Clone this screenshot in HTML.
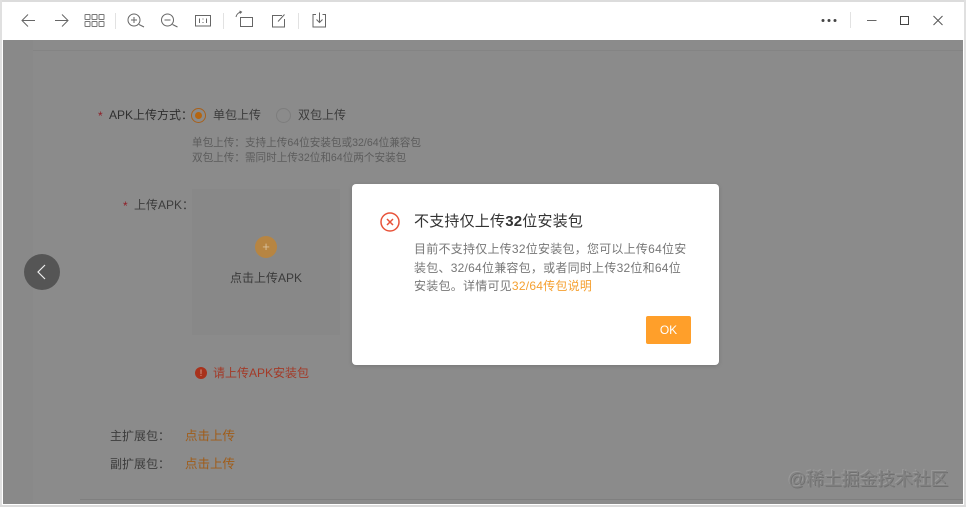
<!DOCTYPE html>
<html><head><meta charset="utf-8">
<style>
html,body{margin:0;padding:0;width:966px;height:507px;overflow:hidden;background:#fff}
body{position:relative;font-family:"Liberation Sans","Noto Sans CJK SC",sans-serif}
.a{position:absolute;white-space:nowrap}
#w{position:absolute;left:0;top:0;width:966px;height:507px;filter:blur(.3px)}
</style></head><body><div id="w">
<div class="a" style="left:0;top:0;width:966px;height:2px;background:#dcdcdc"></div>
<div class="a" style="left:0;top:0;width:2px;height:507px;background:#e0e0e0"></div>
<div class="a" style="left:964px;top:0;width:2px;height:507px;background:#e0e0e0"></div>
<div class="a" style="left:0;top:505px;width:966px;height:2px;background:#dcdcdc"></div>

<svg class="a" style="left:0;top:0" width="966" height="40" fill="none" stroke="#666" stroke-width="1">
<path d="M22 20.500H35M28 14.500l-6 6 6 6"/>
<path d="M55 20.500H68M62 14.500l6 6-6 6"/>
<g stroke="#777"><rect x="85" y="14.500" width="5" height="5" rx=".5"/><rect x="92" y="14.500" width="5" height="5" rx=".5"/><rect x="99" y="14.500" width="5" height="5" rx=".5"/><rect x="85" y="21.500" width="5" height="5" rx=".5"/><rect x="92" y="21.500" width="5" height="5" rx=".5"/><rect x="99" y="21.500" width="5" height="5" rx=".5"/></g>
<path d="M115.500 13V29M223.500 13V29M298.500 13V29M850.500 12V28" stroke="#e2e2e2"/>
<circle cx="134" cy="20" r="6"/><path d="M139 24.500l5 2.500M131 20h6M134 17v6"/>
<circle cx="167.500" cy="20" r="6"/><path d="M172.500 24.500l5 2.500M164.500 20h6"/>
<rect x="195.500" y="15.500" width="15" height="10.500"/><path d="M199.500 18.500v4.500M206.500 18.500v4.500"/><path d="M203 18.500v1M203 22v1"/>
<rect x="240.500" y="17.500" width="12" height="9"/><path d="M236 17c.5-2.500 2.500-4.500 5-5M239.500 11l2 1-1.500 1.500"/>
<path d="M282 15.500h-9.500v11.500h12v-8M278 21.500l6.500-7"/>
<path d="M316 14.500h-3v12.500h12.500v-12.500h-3M319.500 12.500v10M316.500 19.500l3 3 3-3"/>
<circle cx="823" cy="20.500" r="1.500" fill="#444" stroke="none"/><circle cx="829" cy="20.500" r="1.500" fill="#444" stroke="none"/><circle cx="835" cy="20.500" r="1.500" fill="#444" stroke="none"/>
<path d="M867 20.500h9.500"/>
<rect x="900.500" y="16.500" width="8" height="8" stroke="#444"/>
<path d="M933.500 16l9 9M942.500 16l-9 9" stroke="#555"/>
</svg>

<div class="a" style="left:3px;top:40px;width:960px;height:464px;background:#8b8b8b"></div>
<div class="a" style="left:3px;top:40px;width:30px;height:464px;background:#898989"></div>
<div class="a" style="left:33px;top:50px;width:930px;height:1px;background:#848484"></div>
<div class="a" style="left:80px;top:499px;width:883px;height:1px;background:#7f7f7f"></div>

<div class="a" style="left:98px;top:108px;font-size:12px;line-height:17px;color:#8f1f28">*</div>
<div class="a" style="left:109px;top:107px;font-size:12px;line-height:17px;color:#2f2f2f">APK上传方式：</div>
<div class="a" style="left:191px;top:108px;width:13px;height:13px;border:1px solid #a8601a;border-radius:50%"></div>
<div class="a" style="left:195px;top:112px;width:7px;height:7px;background:#b56510;border-radius:50%"></div>
<div class="a" style="left:213px;top:107px;font-size:12px;line-height:17px;color:#3c3c3c">单包上传</div>
<div class="a" style="left:276px;top:108px;width:13px;height:13px;border:1px solid #7d7d7d;border-radius:50%"></div>
<div class="a" style="left:298px;top:107px;font-size:12px;line-height:17px;color:#3c3c3c">双包上传</div>
<div class="a" style="left:192px;top:136px;font-size:10.600px;line-height:15px;color:#5c5c5c">单包上传：支持上传64位安装包或32/64位兼容包</div>
<div class="a" style="left:192px;top:151px;font-size:10.600px;line-height:15px;color:#5c5c5c">双包上传：需同时上传32位和64位两个安装包</div>

<div class="a" style="left:123px;top:198px;font-size:12px;line-height:17px;color:#8f1f28">*</div>
<div class="a" style="left:134px;top:197px;font-size:12px;line-height:17px;color:#3c3c3c">上传APK：</div>
<div class="a" style="left:192px;top:189px;width:148px;height:146px;background:#888"></div>
<div class="a" style="left:255px;top:236px;width:22px;height:22px;background:#b78542;border-radius:50%"></div>
<div class="a" style="left:255px;top:236px;width:22px;height:22px;line-height:22px;text-align:center;font-size:13px;color:#d8c09c">+</div>
<div class="a" style="left:230px;top:270px;font-size:12px;line-height:17px;color:#3a3a3a">点击上传APK</div>

<div class="a" style="left:24px;top:254px;width:36px;height:36px;background:#555;border-radius:50%"></div>
<svg class="a" style="left:24px;top:254px" width="36" height="36" fill="none" stroke="#eee" stroke-width="1.200"><path d="M21 11l-7 7 7 7"/></svg>

<div class="a" style="left:195px;top:367px;width:12px;height:12px;background:#a8321c;border-radius:50%;color:#e0b0a0;font-size:9px;line-height:12px;text-align:center">!</div>
<div class="a" style="left:213px;top:365px;font-size:12px;line-height:17px;color:#a33a28">请上传APK安装包</div>

<div class="a" style="left:110px;top:428px;font-size:12px;line-height:17px;color:#3c3c3c">主扩展包：</div>
<div class="a" style="left:185px;top:428px;font-size:12.500px;line-height:17px;color:#a05c18">点击上传</div>
<div class="a" style="left:110px;top:456px;font-size:12px;line-height:17px;color:#3c3c3c">副扩展包：</div>
<div class="a" style="left:185px;top:456px;font-size:12.500px;line-height:17px;color:#a05c18">点击上传</div>

<div class="a" style="left:788px;top:468px;font-size:17.800px;line-height:22px;color:#828282;text-shadow:1px 1px 0 #707070,-1px -1px 0 #9a9a9a">@稀土掘金技术社区</div>

<div class="a" style="left:352px;top:184px;width:367px;height:181px;background:#fff;border-radius:4px;box-shadow:0 1px 4px rgba(0,0,0,.15)"></div>
<svg class="a" style="left:379px;top:211px" width="22" height="22" fill="none" stroke="#e8533a" stroke-width="1.500"><circle cx="11" cy="11" r="9"/><path d="M8 8l6 6M14 8l-6 6"/></svg>
<div class="a" style="left:414px;top:212px;font-size:15px;line-height:20px;letter-spacing:.2px;color:#333">不支持仅上传<b>32</b>位安装包</div>
<div class="a" style="left:414px;top:240px;font-size:12px;line-height:19px;letter-spacing:.24px;color:#777">目前不支持仅上传32位安装包，您可以上传64位安</div>
<div class="a" style="left:414px;top:259px;font-size:12px;line-height:19px;letter-spacing:.24px;color:#777">装包、32/64位兼容包，或者同时上传32位和64位</div>
<div class="a" style="left:414px;top:277px;font-size:12px;line-height:19px;letter-spacing:.24px;color:#777">安装包。详情可见<span style="color:#f5a030">32/64传包说明</span></div>
<div class="a" style="left:646px;top:316px;width:45px;height:28px;background:#ff9f2a;border-radius:2px;color:#fff;font-size:12px;line-height:29px;text-align:center">OK</div>
</div></body></html>
